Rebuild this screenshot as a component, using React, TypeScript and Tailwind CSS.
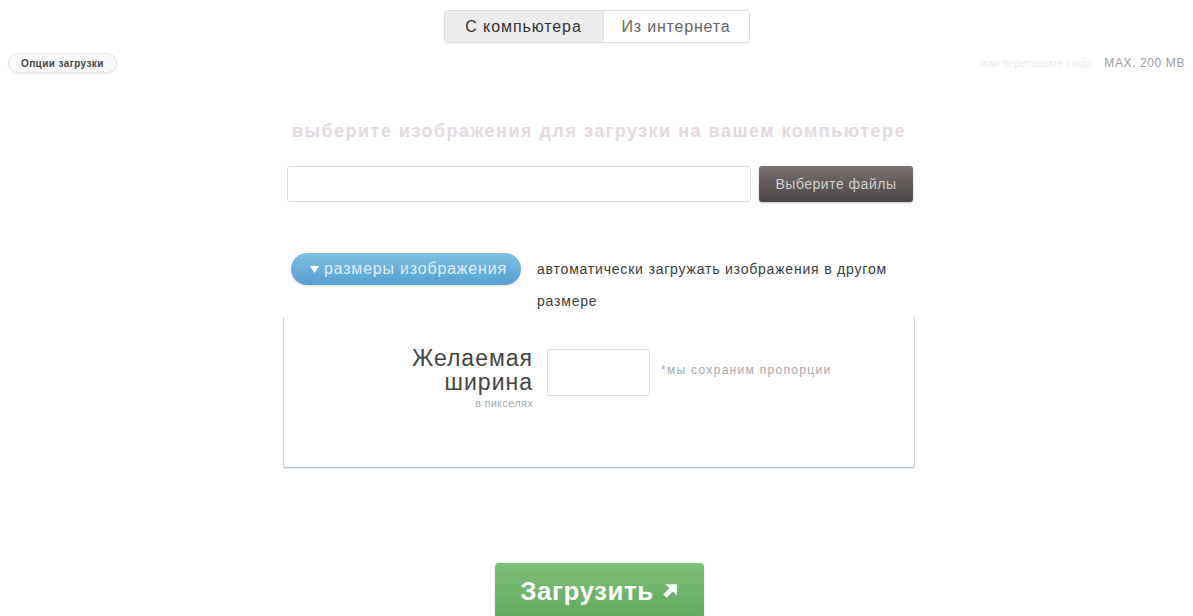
import { useState } from "react";

const font = { fontFamily: '"Liberation Sans", Arial, sans-serif' };

export default function App() {
  const [tab, setTab] = useState("pc");
  const [width, setWidth] = useState("");

  return (
    <div className="min-h-screen bg-white text-[#333]" style={font}>
      {/* source switcher */}
      <div className="flex justify-center pt-[10px]">
        <div className="flex rounded-[4px] border border-[#ddd] bg-white shadow-[0_1px_2px_rgba(0,0,0,0.06)] overflow-hidden">
          <button
            onClick={() => setTab("pc")}
            className={
              "h-[31px] w-[158px] text-[16px] tracking-[0.9px] " +
              (tab === "pc" ? "bg-[#ececec] text-[#333]" : "bg-white text-[#666]")
            }
          >
            С компьютера
          </button>
          <button
            onClick={() => setTab("web")}
            className={
              "h-[31px] w-[146px] text-[16px] tracking-[0.8px] border-l border-[#e4e4e4] " +
              (tab === "web" ? "bg-[#ececec] text-[#333]" : "bg-white text-[#666]")
            }
          >
            Из интернета
          </button>
        </div>
      </div>

      <div className="flex items-center justify-between pl-[8px] pr-[8px] mt-[10px]">
        <button className="h-[20px] px-[12px] rounded-full border border-[#e6e6e6] bg-[#fafafa] shadow-[0_1px_2px_rgba(0,0,0,0.08)] text-[10px] tracking-[0.4px] font-bold text-[#444]">
          Опции загрузки
        </button>
        <div className="text-[12px] tracking-[0.6px] text-[#9a9a9a]">
          <span className="text-[#ececec] mr-[12px] text-[11px] tracking-normal">или перетащите сюда</span>
          MAX. 200 MB
        </div>
      </div>

      <div className="w-[637px] mx-auto pl-[5px]">
        <h2 className="mt-[44px] text-center text-[18px] leading-[28px] tracking-[1.5px] font-bold text-[#e4d9de] whitespace-nowrap">
          выберите изображения для загрузки на вашем компьютере
        </h2>

        <div className="flex gap-[8px] mt-[21px] pl-[4px] pr-[2px]">
          <input
            className="flex-1 h-[36px] rounded-[3px] border border-[#e2dde0] bg-white outline-none px-2"
            readOnly
          />
          <button className="w-[154px] h-[36px] rounded-[3px] bg-gradient-to-b from-[#7a7271] to-[#4b4545] text-[14px] tracking-[0.5px] text-[#d0d0d0] shadow-[0_1px_2px_rgba(0,0,0,0.25)]">
            Выберите файлы
          </button>
        </div>

        {/* resize options */}
        <div className="flex mt-[51px] pl-[8px]">
          <button className="flex items-center gap-[5px] h-[32px] w-[230px] shrink-0 pl-[19px] rounded-full bg-gradient-to-b from-[#80bfe4] to-[#559fd0] text-[16px] tracking-[0.8px] text-[#dcedf8] shadow-[0_1px_2px_rgba(0,0,0,0.15)]">
            <svg width="9" height="7" viewBox="0 0 9 7">
              <path d="M0 0h9L4.5 7z" fill="#fff" />
            </svg>
            размеры изображения
          </button>
          <p className="ml-[16px] w-[380px] text-[14px] tracking-[0.8px] leading-[32px] text-[#3a3a3a]">
            автоматически загружать изображения в другом размере
          </p>
        </div>

        <div className="h-[151px] border-x border-b border-x-[#c9d7e2] border-b-[#a3c6df] rounded-b-[3px] shadow-[0_1px_1px_rgba(120,170,210,0.3)] flex pl-[119px] pt-[32px]">
          <div className="w-[130px] text-right -mt-[3px]">
            <div className="text-[23px] leading-[24px] tracking-[1px] text-[#444]">
              Желаемая
              <br />
              ширина
            </div>
            <div className="text-[11px] leading-[16px] tracking-[0.3px] text-[#aaa] mt-[1px]">в пикселях</div>
          </div>
          <input
            value={width}
            onChange={(e) => setWidth(e.target.value)}
            className="ml-[14px] w-[103px] h-[47px] border border-[#ddd] rounded-[2px] outline-none px-2 text-[16px]"
          />
          <span className="ml-[11px] mt-[12px] text-[12px] leading-[18px] tracking-[1.3px] text-[#a9a9a9]">
            *мы сохраним пропорции
          </span>
        </div>
      </div>

      <div className="flex justify-center mt-[95px] pl-[5px]">
        <button className="flex items-center gap-[8px] h-[56px] w-[209px] justify-center rounded-[4px] bg-gradient-to-b from-[#7cbf78] to-[#61a95e] text-white text-[26px] tracking-[0.5px] font-bold shadow-[0_1px_2px_rgba(0,0,0,0.2)]">
          Загрузить
          <svg width="16" height="16" viewBox="0 0 14 14">
            <path d="M3 1h10v10l-3.5-3.5L4 13 1 10l5.5-5.5z" fill="#fff" />
          </svg>
        </button>
      </div>
    </div>
  );
}
